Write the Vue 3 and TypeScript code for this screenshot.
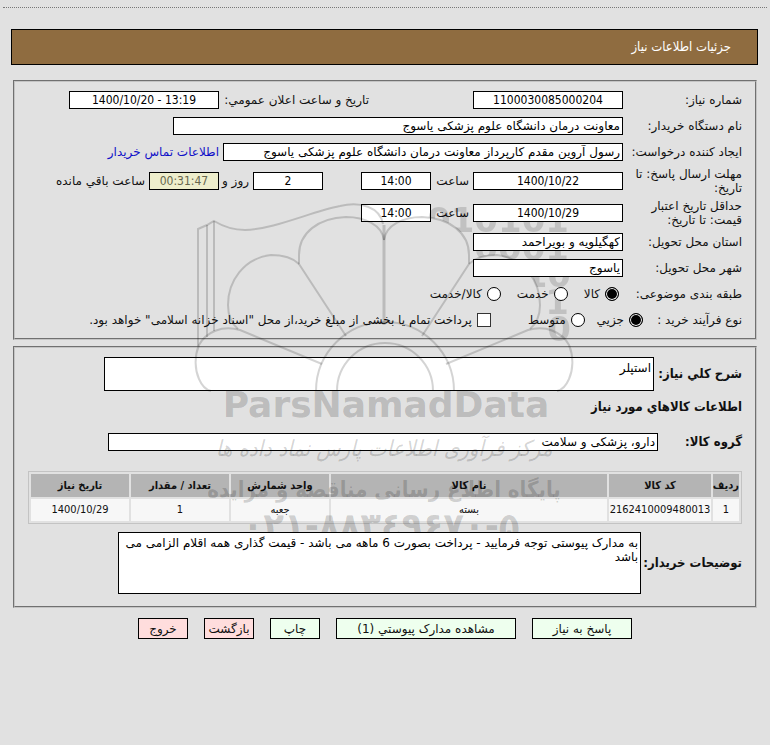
<script setup lang="ts">
import { reactive } from 'vue'

interface Item {
  row: number
  code: string
  name: string
  unit: string
  amount: string
  date: string
}

const need = reactive({
  number: '1100030085000204',
  announced: '1400/10/20 - 13:19',
  buyer: 'معاونت درمان دانشگاه علوم پزشکی یاسوج',
  creator: 'رسول آروین مقدم کارپرداز معاونت درمان دانشگاه علوم پزشکی یاسوج',
  replyDate: '1400/10/22',
  replyTime: '14:00',
  daysLeft: '2',
  timeLeft: '00:31:47',
  validDate: '1400/10/29',
  validTime: '14:00',
  province: 'کهگیلویه و بویراحمد',
  city: 'یاسوج',
  category: 'goods',
  process: 'small',
  treasury: false,
  summary: 'استپلر',
  group: 'دارو، پزشکی و سلامت',
  notes: 'به مدارک پیوستی توجه فرمایید - پرداخت بصورت 6 ماهه می باشد - قیمت گذاری همه اقلام الزامی می باشد',
})

const categories = [
  { value: 'goods', label: 'کالا' },
  { value: 'service', label: 'خدمت' },
  { value: 'both', label: 'کالا/خدمت' },
]

const processes = [
  { value: 'small', label: 'جزيي' },
  { value: 'medium', label: 'متوسط' },
]

const items: Item[] = [
  { row: 1, code: '2162410009480013', name: 'بسته', unit: 'جعبه', amount: '1', date: '1400/10/29' },
]
</script>

<template>
  <main class="page" dir="rtl">
    <hr class="rule" />
    <h1 class="banner">جزئیات اطلاعات نیاز</h1>

    <form class="sheet" @submit.prevent>
      <section class="panel facts">
        <div class="row">
          <label class="caption" for="number">شماره نیاز:</label>
          <input id="number" v-model="need.number" class="box date" />
          <label class="second" for="announced">تاریخ و ساعت اعلان عمومي:</label>
          <input id="announced" v-model="need.announced" class="box date" />
        </div>
        <div class="row">
          <label class="caption" for="buyer">نام دستگاه خریدار:</label>
          <input id="buyer" v-model="need.buyer" class="box buyer" />
        </div>
        <div class="row">
          <label class="caption" for="creator">ایجاد کننده درخواست:</label>
          <input id="creator" v-model="need.creator" class="box creator" />
          <a class="contact" href="#contact">اطلاعات تماس خریدار</a>
        </div>
        <div class="row tall">
          <label class="caption" for="reply-date">مهلت ارسال پاسخ: تا تاریخ:</label>
          <input id="reply-date" v-model="need.replyDate" class="box date" />
          <label class="hour" for="reply-time">ساعت</label>
          <input id="reply-time" v-model="need.replyTime" class="box time" />
          <input id="days-left" v-model="need.daysLeft" class="box time days" />
          <label class="and" for="days-left">روز و</label>
          <input id="time-left" v-model="need.timeLeft" class="box time left" disabled />
          <label class="remain" for="time-left">ساعت باقي مانده</label>
        </div>
        <div class="row tall">
          <label class="caption" for="valid-date">حداقل تاریخ اعتبار قیمت: تا تاریخ:</label>
          <input id="valid-date" v-model="need.validDate" class="box date over" />
          <label class="hour" for="valid-time">ساعت</label>
          <input id="valid-time" v-model="need.validTime" class="box time" />
        </div>
        <div class="row">
          <label class="caption" for="province">استان محل تحویل:</label>
          <input id="province" v-model="need.province" class="box place over" />
        </div>
        <div class="row">
          <label class="caption" for="city">شهر محل تحویل:</label>
          <input id="city" v-model="need.city" class="box place over" />
        </div>
        <div class="row" role="radiogroup" aria-labelledby="category-caption">
          <span id="category-caption" class="caption">طبقه بندی موضوعی:</span>
          <div class="choices">
            <label v-for="c in categories" :key="c.value" class="choice">
              <input v-model="need.category" type="radio" name="category" :value="c.value" />
              <span>{{ c.label }}</span>
            </label>
          </div>
        </div>
        <div class="row" role="radiogroup" aria-labelledby="process-caption">
          <span id="process-caption" class="caption short">نوع فرآیند خرید :</span>
          <div class="choices">
            <label v-for="p in processes" :key="p.value" class="choice">
              <input v-model="need.process" type="radio" name="process" :value="p.value" />
              <span>{{ p.label }}</span>
            </label>
          </div>
          <label class="choice treasury">
            <input v-model="need.treasury" type="checkbox" />
            <span>پرداخت تمام یا بخشی از مبلغ خرید،از محل "اسناد خزانه اسلامی" خواهد بود.</span>
          </label>
        </div>
      </section>

      <section class="panel goods">
        <div class="line">
          <label class="strong" for="summary">شرح کلي نیاز:</label>
          <textarea id="summary" v-model="need.summary" class="box area summary"></textarea>
        </div>
        <h2 class="heading">اطلاعات کالاهاي مورد نیاز</h2>
        <div class="line">
          <label class="strong group-label" for="group">گروه کالا:</label>
          <input id="group" v-model="need.group" class="box group" />
        </div>
        <table class="items">
          <thead>
            <tr>
              <th class="c-row">ردیف</th>
              <th class="c-code">کد کالا</th>
              <th>نام کالا</th>
              <th class="c-mid">واحد شمارش</th>
              <th class="c-mid">تعداد / مقدار</th>
              <th class="c-mid">تاریخ نیاز</th>
            </tr>
          </thead>
          <tbody>
            <tr v-for="i in items" :key="i.row">
              <td>{{ i.row }}</td>
              <td>{{ i.code }}</td>
              <td>{{ i.name }}</td>
              <td>{{ i.unit }}</td>
              <td>{{ i.amount }}</td>
              <td>{{ i.date }}</td>
            </tr>
          </tbody>
        </table>
        <div class="line">
          <label class="strong notes-label" for="notes">توضیحات خریدار:</label>
          <textarea id="notes" v-model="need.notes" class="box area notes over"></textarea>
        </div>
      </section>

      <div class="actions">
        <button type="button" class="action reply">پاسخ به نیاز</button>
        <button type="button" class="action files">مشاهده مدارک پیوستي (1)</button>
        <button type="button" class="action">چاپ</button>
        <button type="button" class="action danger">بازگشت</button>
        <button type="button" class="action danger">خروج</button>
      </div>
    </form>

    <svg class="mark" viewBox="190 200 390 350" width="390" height="350" aria-hidden="true">
      <defs>
        <mask id="behind" maskUnits="userSpaceOnUse" x="190" y="190" width="400" height="370">
          <rect x="190" y="190" width="400" height="370" fill="#fff" />
          <path
            fill="#000"
            d="M384 240C386 225 403 217 422 217C450 218 469 233 469 255V264C476 257 487 255 497 256C524 259 540 281 540 305C540 314 537 323 530 331V400H384Z"
          />
        </mask>
      </defs>
      <g class="digits" mask="url(#behind)">
        <text x="569" y="232">010101</text>
        <text x="569" y="260">0001</text>
        <text x="571" y="287">10</text>
        <text x="569" y="314">1</text>
        <text x="571" y="341">0</text>
      </g>
      <g class="lines">
        <path d="M198 346V229L207 225L214 221C224 227 234 230 245 230C275 229 310 212 340 206C360 201 380 207 383 224" />
        <path d="M207 337V225M214 331V221" />
        <path d="M384 240C382 225 365 217 346 217C318 218 299 233 299 255V264L346 336" />
        <path d="M299 264C292 257 281 255 271 255C244 258 228 281 228 305C228 315 231 323 238 329" />
        <path d="M322 364L240 330C222 325 206 332 199 345C194 357 195 370 199 379C202 386 206 390 211 391" />
        <path d="M469 264L422 336M384 240C386 225 403 217 422 217C450 218 469 233 469 255V264" />
        <path d="M469 264C476 257 487 255 497 255C524 258 540 281 540 305C540 315 537 323 530 329" />
        <path d="M446 364L528 330C546 325 562 332 569 345C574 357 573 370 569 379C566 386 562 390 557 391" />
        <path d="M316 391A69 69 0 0 1 454 391M337 391A48 48 0 0 1 433 391" />
        <path class="stem" d="M384 225V325" />
      </g>
      <text class="brand" x="386" y="417">ParsNamadData</text>
      <text class="script" x="384" y="456">مرکز فرآوری اطلاعات پارس نماد داده ها</text>
      <text class="portal" x="384" y="497">پایگاه اطلاع رسانی مناقصه و مزایده</text>
      <text class="phone" x="381" y="537">۰۲۱-۸۸۳٤۹۶۷۰-۵</text>
    </svg>
  </main>
</template>

<style>
body {
  background: #e1e1e1;
}
</style>

<style scoped>
.page {
  position: relative;
  box-sizing: border-box;
  padding: 7px 11px 0;
  color: #111;
  font-family: "DejaVu Sans", sans-serif;
  font-size: 12px;
  line-height: 14px;
}
.page * {
  box-sizing: border-box;
}
.rule {
  margin: 0 -8px;
  border: 0;
  border-top: 1px dotted #777;
}
.banner {
  margin: 21px 1px 15px 0;
  padding: 10px 26px;
  border: 1px solid #000;
  background: #8f6c40;
  color: #fff;
  font-family: "DejaVu Sans Condensed", "DejaVu Sans", sans-serif;
  font-stretch: condensed;
  font-size: 13px;
  font-weight: normal;
  line-height: 14px;
}
.sheet {
  padding: 0 2px;
}
.panel {
  border: 2px groove #c4c4c4;
  padding: 5px 13px;
}
.facts {
  margin-bottom: 6px;
}
.row {
  display: flex;
  align-items: center;
  height: 26px;
}
.row.tall {
  height: 32px;
}
.caption {
  flex: none;
  width: 119px;
  padding-left: 6px;
  white-space: nowrap;
}
.tall .caption {
  white-space: normal;
}
.caption.short {
  width: 99px;
  padding-left: 0;
}
.box {
  margin: 0;
  padding: 1px 2px;
  border: 1px solid #000;
  border-radius: 0;
  outline: 0;
  background: #fff;
  color: #000;
  font: inherit;
  height: 18px;
  min-width: 0;
}
.over {
  position: relative;
  z-index: 2;
}
.date,
.time {
  font-family: "DejaVu Sans Condensed", "DejaVu Sans", sans-serif;
  font-stretch: condensed;
  text-align: center;
  direction: ltr;
}
.date {
  width: 150px;
}
.time {
  width: 70px;
}
.place {
  width: 150px;
}
.second {
  width: 150px;
  margin-right: 104px;
  white-space: nowrap;
}
.buyer {
  width: 450px;
}
.creator {
  width: 400px;
}
.contact {
  margin-right: 4px;
  color: #1010c8;
  text-decoration: none;
  white-space: nowrap;
}
.hour {
  width: 42px;
  padding-right: 4px;
}
.days {
  margin-right: 38px;
}
.and {
  width: 34px;
  padding-right: 4px;
  white-space: nowrap;
}
.left {
  background: #eeeecc;
  color: #66664c;
}
.remain {
  margin-right: 4px;
  white-space: nowrap;
}
.choices {
  display: flex;
  gap: 16px;
  padding-right: 4px;
}
.short + .choices {
  gap: 12px;
  padding-right: 0;
}
.choice {
  display: flex;
  align-items: center;
  gap: 5px;
  white-space: nowrap;
}
.treasury {
  margin-right: 37px;
}
.choice input {
  appearance: none;
  flex: none;
  position: relative;
  z-index: 2;
  width: 14px;
  height: 14px;
  margin: 0;
  border: 1px solid #000;
  background: #fff;
}
.choice input[type="radio"] {
  border-radius: 50%;
}
.choice input[type="radio"]:checked {
  background: #000;
  box-shadow: inset 0 0 0 1px #fff;
}
.choice input[type="checkbox"] {
  border-color: #333;
}
.choice input[type="checkbox"]:checked {
  box-shadow: inset 0 0 0 3px #fff;
  background: #000;
}
.goods {
  padding: 9px 13px 12px;
}
.line {
  display: flex;
  align-items: center;
}
.strong,
.heading {
  font-family: "DejaVu Sans Condensed", "DejaVu Sans", sans-serif;
  font-stretch: condensed;
  font-size: 13px;
  font-weight: bold;
}
.strong {
  flex: none;
  width: 88px;
  white-space: nowrap;
}
.area {
  display: block;
  resize: none;
  overflow: hidden;
  padding-top: 3px;
}
.summary {
  width: 550px;
  height: 34px;
}
.heading {
  margin: 9px 0 19px;
  line-height: 14px;
}
.strong.group-label {
  width: 84px;
}
.group {
  width: 550px;
}
.items {
  width: 100%;
  margin: 20px 0 8px;
  border: 1px solid #c3c3c3;
  border-collapse: separate;
  border-spacing: 2px;
  table-layout: fixed;
  text-align: center;
  font-family: "DejaVu Sans Condensed", "DejaVu Sans", sans-serif;
  font-stretch: condensed;
  font-size: 11px;
}
.items th {
  height: 23px;
  padding: 0;
  background: #b4b4b4;
  font-weight: bold;
  white-space: nowrap;
}
.items td {
  height: 22px;
  padding: 0;
  background: #f7f7f7;
}
.c-row {
  width: 26px;
}
.c-code {
  width: 102px;
}
.c-mid {
  width: 98px;
}
.strong.notes-label {
  width: 101px;
}
.notes {
  width: 523px;
  height: 62px;
}
.actions {
  display: flex;
  justify-content: center;
  gap: 16px;
  padding-top: 10px;
}
.action {
  width: 50px;
  height: 21px;
  padding: 0;
  border: 1px solid #000;
  border-radius: 0;
  background: #eeffee;
  color: #111;
  font: inherit;
}
.action.reply {
  width: 100px;
}
.action.files {
  width: 180px;
}
.action.danger {
  background: #ffdddd;
}
.mark {
  position: absolute;
  top: 200px;
  left: 0;
  right: 0;
  margin: 0 auto;
  z-index: 1;
  pointer-events: none;
}
.lines {
  fill: none;
  stroke: #000;
  stroke-opacity: 0.17;
  stroke-width: 2;
}
.stem {
  stroke-width: 3;
}
.mark text {
  fill: #000;
  fill-opacity: 0.18;
  text-anchor: middle;
  direction: ltr;
}
.mark .digits text {
  fill-opacity: 0.14;
  text-anchor: end;
  font-weight: bold;
  font-size: 34px;
}
.mark .brand {
  font-weight: bold;
  font-size: 36px;
}
.mark .script {
  direction: rtl;
  font-family: "DejaVu Sans Condensed", "DejaVu Sans", sans-serif;
  font-stretch: condensed;
  font-style: italic;
  font-size: 22px;
}
.mark .portal {
  direction: rtl;
  font-family: "DejaVu Sans Condensed", "DejaVu Sans", sans-serif;
  font-stretch: condensed;
  font-weight: bold;
  font-size: 22px;
}
.mark .phone {
  unicode-bidi: bidi-override;
  font-weight: bold;
  font-size: 34px;
}
</style>
